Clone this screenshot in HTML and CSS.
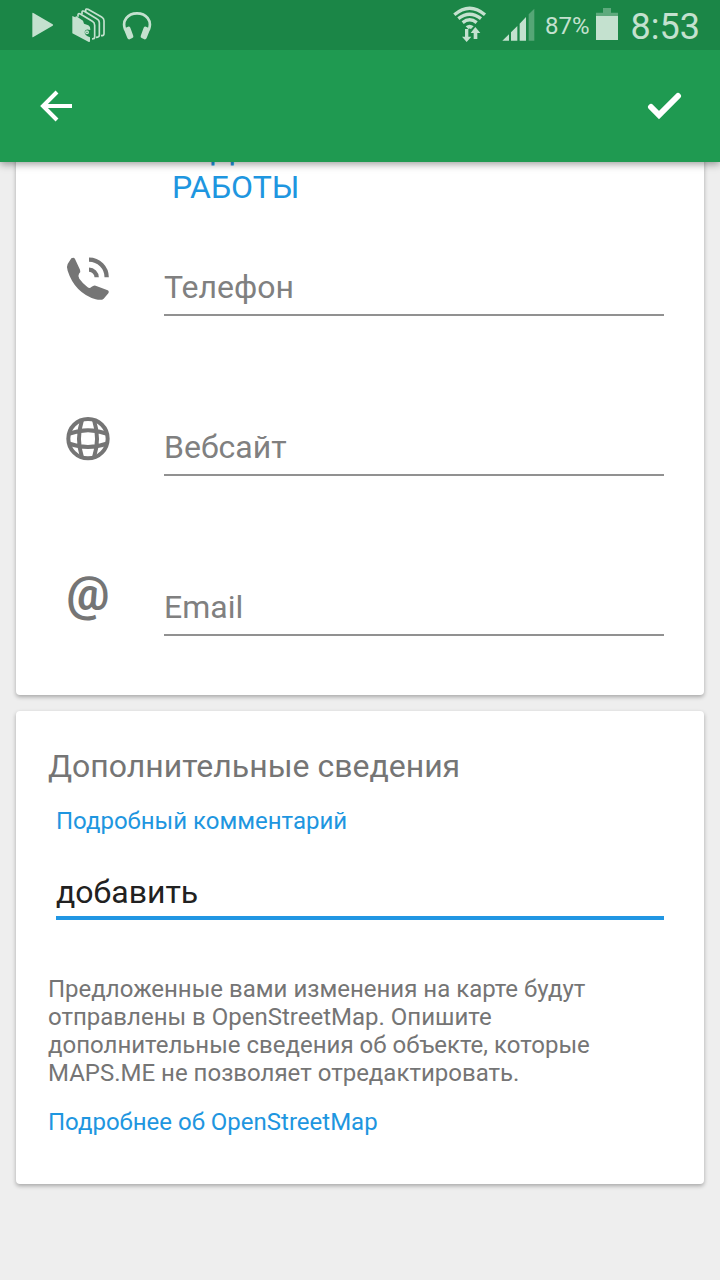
FILE: index.html
```html
<!DOCTYPE html>
<html lang="ru">
<head>
    <meta charset="UTF-8">
    <meta name="viewport" content="width=device-width, initial-scale=1.0">
    <title>MAPS.ME</title>
    <link rel="stylesheet" href="styles.css">
</head>
<body>
    <header class="header">
        <div class="status-bar">
            <svg class="play-icon" viewBox="0 0 66 150"><path d="M1 40q0-3 3-1l58 34q3 2 0 4L4 111q-3 2-3-1z" fill="currentColor"/></svg>
            <svg class="cards-icon" viewBox="0 0 99 150" fill="none" stroke="currentColor" stroke-width="5" stroke-linejoin="round">
                <path d="M41 37V31q0-6 7-3l41 23q7 4 7 11v39q0 6-9 6"/>
                <path d="M30 42V37q0-6 7-3l37 22q8 4 8 12v38q0 6-10 6"/>
                <path d="M18 50V45q0-6 7-3l36 22q7 4 7 12v36q0 5-8 5"/>
                <path d="M1 48l9 4 2-4 21 14 3 9 13 5q7 4 6 14-15-5-17 5-1 11 16 17v11q0 4-5 2L1 100z" fill="currentColor" stroke="none"/>
                <circle cx="45" cy="97" r="4" stroke-width="4"/>
            </svg>
            <svg class="headphones-icon" viewBox="0 0 90 150">
                <path d="M10 90C-2 62 18 40 45 40S92 62 80 90" fill="none" stroke="currentColor" stroke-width="8"/>
                <path d="M5 86l13-6q5-1 7 3l9 25q1 4-3 6l-8 4q-5 1-7-4zM85 86l-13-6q-5-1-7 3l-9 25q-1 4 3 6l8 4q5 1 7-4z" fill="currentColor"/>
            </svg>
            <div class="status-right">
                <svg class="wifi-icon" viewBox="0 0 108 150">
                    <path d="M7 44Q53 5 99 44M19 56Q53 29 87 56M32 68Q53 51 74 68" fill="none" stroke="currentColor" stroke-width="10"/>
                    <path d="M41 79q12-10 24 0l-8 8q-4-3-8 0zM39 87h10v23h9l-14 16-14-16h9zM65 117V99h-9l14-18 15 18h-9v18z" fill="currentColor"/>
                </svg>
                <svg class="signal-icon" viewBox="0 0 99 150" fill="currentColor">
                    <path d="M1 122l20-19v19zM27 97l19-19v44H27zM53 71l19-20v71H53z"/>
                    <path d="M80 43l17-17v96H80z" opacity=".35"/>
                </svg>
                <span class="battery-level">87%</span>
                <svg class="battery-icon" viewBox="0 0 66 150" fill="currentColor">
                    <path d="M0 38h21V24h24v14h21v10H0z" opacity=".4"/>
                    <path d="M0 48h66v72H0z"/>
                </svg>
                <time class="clock">8:53</time>
            </div>
        </div>
        <div class="toolbar">
            <button class="icon-button" aria-label="Назад">
                <svg width="32" height="32" viewBox="0 0 32 32"><path d="M32 16H3M17 2L3 16l14 14" fill="none" stroke="currentColor" stroke-width="4"/></svg>
            </button>
            <button class="icon-button" aria-label="Готово">
                <svg width="36" height="32" viewBox="0 0 36 32"><path d="M5 17l8 8L32 6" fill="none" stroke="currentColor" stroke-width="6" stroke-linecap="round"/></svg>
            </button>
        </div>
    </header>

    <main class="content">
        <section class="card">
            <button class="hours-button">РЕДАКТИРОВАТЬ ЧАСЫ<br>РАБОТЫ</button>
            <div class="field">
                <svg class="field-icon" viewBox="0 0 144 144" fill="none" stroke="currentColor">
                    <path d="M22 13q8-4 11 2l15 32q3 6-3 12-4 6 1 15 10 14 25 26 6 4 11-1 7-6 13-4l34 13q8 3 4 10l-14 16q-6 6-24 2Q32 116 11 50q-4-13 0-20z" fill="currentColor" stroke="none"/>
                    <path d="M75 17a53 53 0 0 1 53 53M75 47a23 23 0 0 1 23 23" stroke-width="13"/>
                </svg>
                <input type="tel" class="field-input" placeholder="Телефон" aria-label="Телефон">
            </div>
            <div class="field">
                <svg class="field-icon" viewBox="0 0 144 144" fill="none" stroke="currentColor" stroke-width="12">
                    <circle cx="72" cy="74" r="59"/>
                    <path d="M54 18Q36 74 54 130M90 18Q108 74 90 130M14 60Q72 38 130 60M14 88Q72 110 130 88"/>
                </svg>
                <input type="url" class="field-input" placeholder="Вебсайт" aria-label="Вебсайт">
            </div>
            <div class="field">
                <span class="field-icon at-icon">@</span>
                <input type="email" class="field-input" placeholder="Email" aria-label="Email">
            </div>
        </section>

        <section class="card notes">
            <h2>Дополнительные сведения</h2>
            <div class="comment">
                <label for="comment">Подробный комментарий</label>
                <input type="text" id="comment" value="добавить">
            </div>
            <p>Предложенные вами изменения на карте будут отправлены в OpenStreetMap. Опишите дополнительные сведения об объекте, которые MAPS.ME не позволяет отредактировать.</p>
            <a href="#">Подробнее об OpenStreetMap</a>
        </section>
    </main>
</body>
</html>
```
FILE: styles.css
```css
* {
    margin: 0;
    padding: 0;
    box-sizing: border-box;
}

body {
    min-height: 100vh;
    background: #eeeeee;
    color: #757575;
    font-family: Roboto, sans-serif;
    font-size: 24px;
    line-height: 28px;
}

button, input {
    font-family: inherit;
    border: none;
    border-radius: 0;
    background: none;
    outline: none;
}

svg {
    display: block;
}

.header {
    position: sticky;
    top: 0;
    z-index: 1;
    background: #1f9a51;
    box-shadow: 0 2px 8px rgba(0, 0, 0, 0.4);
}

.status-bar {
    display: flex;
    align-items: center;
    height: 50px;
    padding: 0 20px 0 32px;
    background: #1b8647;
    color: #c4e1cf;
}

.status-bar svg {
    height: 50px;
}

.play-icon {
    width: 22px;
    margin-right: 18px;
}

.cards-icon {
    width: 33px;
    margin-right: 17px;
}

.headphones-icon {
    width: 30px;
}

.status-right {
    display: flex;
    align-items: center;
    margin-left: auto;
}

.wifi-icon {
    width: 36px;
    margin-right: 14px;
}

.signal-icon {
    width: 33px;
    margin-right: 10px;
}

.battery-level {
    margin-right: 6px;
    padding-top: 2px;
}

.battery-icon {
    width: 22px;
    margin-right: 13px;
}

.clock {
    padding-top: 4px;
    font-size: 36px;
}

.toolbar {
    display: flex;
    justify-content: space-between;
    align-items: center;
    height: 112px;
    padding: 0 38px 0 40px;
}

.icon-button {
    color: #fff;
    cursor: pointer;
}

.content {
    display: flex;
    flex-direction: column;
    gap: 16px;
    margin-top: -40px;
    padding: 0 16px 96px;
}

.card {
    background: #fff;
    border-radius: 4px;
    box-shadow: 0 2px 4px rgba(0, 0, 0, 0.3);
}

.hours-button {
    display: block;
    margin: 8px 0 9px 156px;
    color: #1e96e0;
    font-size: 32px;
    line-height: 38px;
    text-align: left;
    cursor: pointer;
}

.field {
    display: flex;
    align-items: flex-start;
    padding: 39px 40px 59px 48px;
}

.field-icon {
    width: 48px;
    height: 48px;
    margin-right: 52px;
}

.field-input {
    flex: 1;
    min-width: 0;
    height: 62px;
    padding-top: 6px;
    border-bottom: 2px solid #919191;
    color: #212121;
    font-size: 32px;
}

.field-input::placeholder {
    color: #808080;
    opacity: 1;
}

.at-icon {
    font-size: 48px;
    font-weight: 700;
    line-height: 40px;
    text-align: center;
}

.notes {
    padding: 36px 40px 48px 32px;
}

.notes h2 {
    margin-bottom: 22px;
    font-size: 32px;
    font-weight: 400;
    line-height: 38px;
}

.comment {
    display: flex;
    flex-direction: column;
    margin: 0 0 55px 8px;
    color: #1e96e0;
}

.comment input {
    height: 85px;
    padding-top: 32px;
    border-bottom: 4px solid #2196e3;
    color: #212121;
    font-size: 32px;
}

.notes p {
    margin-bottom: 21px;
}

.notes a {
    display: block;
    color: #1e96e0;
    text-decoration: none;
}
```
